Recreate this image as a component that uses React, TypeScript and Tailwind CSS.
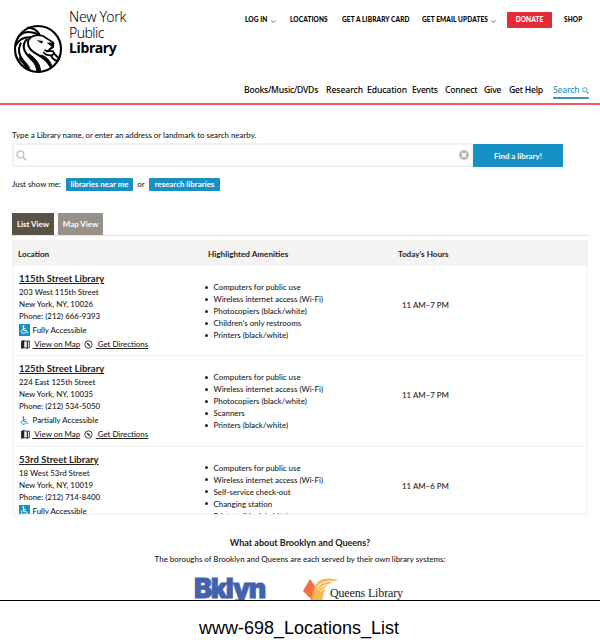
import React from "react";

const lines = "underline underline-offset-1";

function Lion() {
  return (
    <svg className="h-[50px] w-[50px] shrink-0" viewBox="38 72 150 150" fill="none" stroke="#000">
      <circle cx="113" cy="147" r="69" strokeWidth="6.5" />
      <g strokeLinecap="round" strokeLinejoin="round">
        <path d="M57 107 Q80 86 117 104" strokeWidth="6" />
        <path d="M82 83 Q106 83 117 103" strokeWidth="6" />
        <path d="M46 136 Q60 110 90 112" strokeWidth="6" />
        <path d="M92 111 Q110 101 128 108 L158 127 L158 142 L149 146" strokeWidth="5" />
        <path d="M143 129 L161 129 L157 140 Z" fill="#000" strokeWidth="3" />
        <path d="M113 122 L127 124 L125 129 Z" fill="#000" strokeWidth="2" />
        <path d="M157 141 L143 153 L134 151 M139 154 L158 153 L161 160 L154 167 L137 164 L130 158" strokeWidth="5" />
        <path d="M91 112 C77 123 82 145 101 157 C116 166 138 176 152 201" strokeWidth="6" />
        <path d="M79 118 C62 137 72 157 89 174 C103 188 112 195 118 215" strokeWidth="6" />
        <path d="M87 162 C106 176 119 190 121 214 L110 214 C106 192 96 178 84 167 Z" fill="#000" strokeWidth="3" />
        <path d="M124 165 C138 170 148 180 155 197 L149 201 C142 184 133 175 120 168 Z" fill="#000" strokeWidth="2" />
        <path d="M61 130 C50 152 58 170 70 184" strokeWidth="6" />
        <path d="M58 172 C75 183 86 195 91 212 L76 205 C72 195 66 186 57 180 Z" fill="#000" strokeWidth="2" />
        <path d="M153 167 Q156 178 171 183 M161 160 L177 177" strokeWidth="6" />
      </g>
    </svg>
  );
}

function Glass({ className }: { className: string }) {
  return (
    <svg className={className} viewBox="0 0 12 12" fill="none" stroke="currentColor">
      <circle cx="4.8" cy="4.8" r="3.8" strokeWidth="1.4" />
      <path d="M7.6 7.6 L11.2 11.2" strokeWidth="1.8" />
    </svg>
  );
}

function Caret() {
  return (
    <svg className="mt-[2px] h-[3px] w-[5px]" viewBox="0 0 5 3" fill="none" stroke="#555" strokeWidth=".8">
      <path d="M.3 .4 Q1 2 2.5 2 Q4 2 4.7 .4" />
    </svg>
  );
}

function Wheelchair({ full }: { full: boolean }) {
  return (
    <svg
      className={full ? "h-[11.5px] w-[11px] shrink-0 bg-[#1b91c3] text-white" : "h-[11.5px] w-[11px] shrink-0 text-[#1b91c3]"}
      viewBox="0 0 11 11.5"
      fill="none"
      stroke="currentColor"
    >
      <circle cx="4.4" cy="2.3" r="1" fill="currentColor" stroke="none" />
      <path d="M4.5 3 V6.4 H7.2 L8.1 8.7 L9.2 8.3 M4.5 4.7 H6.8" strokeWidth=".95" />
      <path d="M3.7 5.1 A2.2 2.2 0 1 0 6.6 7.9" strokeWidth=".9" />
    </svg>
  );
}

function MapIcon() {
  return (
    <svg className="h-[9px] w-[9px] shrink-0" viewBox="0 0 9 9" fill="none" stroke="#222">
      <path d="M.7 1.2 L3 .7 L6 1.3 L8.3 .8 V7.6 L6 8.2 L3 7.6 L.7 8.2 Z" strokeWidth=".9" />
      <path d="M.7 1.2 L3 .7 V7.6 L.7 8.2 Z" fill="#222" strokeWidth=".6" />
      <path d="M6.3 1.3 V8.2" strokeWidth="1.2" />
    </svg>
  );
}

function Compass() {
  return (
    <svg className="h-[9px] w-[9px] shrink-0" viewBox="0 0 9 9" fill="none" stroke="#333">
      <circle cx="4.5" cy="4.5" r="3.7" strokeWidth=".9" />
      <path d="M2.2 2.2 L5.2 3.8 L6.8 6.8 L3.8 5.2 Z" fill="#333" stroke="none" />
    </svg>
  );
}

const libraries = [
  {
    name: "115th Street Library", street: "203 West 115th Street", city: "New York, NY, 10026", phone: "(212) 666-9393",
    full: true, hours: "11 AM–7 PM",
    amenities: ["Computers for public use", "Wireless internet access (Wi-Fi)", "Photocopiers (black/white)", "Children's only restrooms", "Printers (black/white)"],
  },
  {
    name: "125th Street Library", street: "224 East 125th Street", city: "New York, NY, 10035", phone: "(212) 534-5050",
    full: false, hours: "11 AM–7 PM",
    amenities: ["Computers for public use", "Wireless internet access (Wi-Fi)", "Photocopiers (black/white)", "Scanners", "Printers (black/white)"],
  },
  {
    name: "53rd Street Library", street: "18 West 53rd Street", city: "New York, NY, 10019", phone: "(212) 714-8400",
    full: true, hours: "11 AM–6 PM",
    amenities: ["Computers for public use", "Wireless internet access (Wi-Fi)", "Self-service check-out", "Changing station", "Printers (black/white)"],
  },
];

function Row({ lib }: { lib: (typeof libraries)[number] }) {
  return (
    <div className="flex h-[90.4px] shrink-0 border-b border-[#f3f3f3]">
      <div className="w-[192px] pl-[6px] pt-[6px]">
        <div className="text-[9.5px] leading-[14px] font-bold underline underline-offset-1">{lib.name}</div>
        <div>{lib.street}</div>
        <div>{lib.city}</div>
        <div>Phone: {lib.phone}</div>
        <div className="mt-[2px] flex h-[12px] items-center gap-[2.5px]">
          <Wheelchair full={lib.full} />
          <span>{lib.full ? "Fully Accessible" : "Partially Accessible"}</span>
        </div>
        <div className="mt-[2px] flex h-[12px] items-center pl-[2px]">
          <MapIcon />
          <span className={"ml-[2.5px] whitespace-pre " + lines}>{" View on Map"}</span>
          <span className="w-[4px]" />
          <Compass />
          <span className={"ml-[2.5px] whitespace-pre " + lines}>{" Get Directions"}</span>
        </div>
      </div>
      <ul className="w-[197px] pt-[15px]">
        {lib.amenities.map((a) => (
          <li key={a} className="flex items-center">
            <span className="mr-[5.5px] h-[3px] w-[3px] rounded-full bg-[#222]" />
            {a}
          </li>
        ))}
      </ul>
      <div className="pt-[33px]">{lib.hours}</div>
    </div>
  );
}

export default function App() {
  return (
    <div className="flex h-[640px] w-[600px] flex-col overflow-hidden bg-white font-['Lato',sans-serif] text-[7.9px] leading-[12px] font-medium whitespace-nowrap text-[#222]">
      <div className="flex h-[600px] shrink-0 flex-col overflow-hidden">
        <header className="flex h-[105px] shrink-0 border-b-2 border-[#f05a5f] font-['Noto_Sans',sans-serif] text-black">
          <div className="flex w-[244px] pl-[13px]">
            <div className="pt-[24px]"><Lion /></div>
            <div className="ml-[6px] pt-[9px] text-[14px] leading-[15.7px] font-light">
              <div className="tracking-[-0.25px]">New York</div>
              <div className="tracking-[-0.55px]">Public</div>
              <div className="font-bold tracking-[-0.3px]">Library</div>
            </div>
          </div>
          <div className="flex flex-1 flex-col">
            <div className="flex h-[40px] items-center pl-[1px] font-['Lato',sans-serif] text-[6.5px] font-black tracking-[.12px]">
              <span className="flex w-[45px] items-center gap-[3px]">LOG IN <Caret /></span>
              <span className="w-[52px]">LOCATIONS</span>
              <span className="w-[80px]">GET A LIBRARY CARD</span>
              <span className="flex w-[85px] items-center gap-[3px]">GET EMAIL UPDATES <Caret /></span>
              <span className="flex h-[16px] w-[45px] items-center justify-center rounded-[1px] bg-[#e32b36] text-white">DONATE</span>
              <span className="ml-[12px]">SHOP</span>
            </div>
            <nav className="flex pt-[44px] text-[8.6px] leading-[13px] font-medium tracking-[-.22px]">
              <span className="w-[82px]">Books/Music/DVDs</span>
              <span className="w-[41px] tracking-[-.05px]">Research</span>
              <span className="w-[45px] tracking-[-.1px]">Education</span>
              <span className="w-[33px]">Events</span>
              <span className="w-[39px]">Connect</span>
              <span className="w-[25px]">Give</span>
              <span className="w-[44px]">Get Help</span>
              <span className="flex w-[36px] items-center justify-between border-b-2 border-[#3b96b4] text-[#3b96b4]">
                Search <Glass className="h-[7px] w-[7px]" />
              </span>
            </nav>
          </div>
        </header>
        <main className="flex flex-col px-[12px]">
          <div className="mt-[24px]">Type a Library name, or enter an address or landmark to search nearby.</div>
          <div className="mt-[2px] flex h-[24px]">
            <div className="flex w-[461px] items-center justify-between border-2 border-r border-[#f1f1f1] pr-[3px] pl-[2px] text-[#bebab3]">
              <Glass className="h-[11px] w-[11px]" />
              <svg className="h-[10px] w-[10px]" viewBox="0 0 10 10">
                <circle cx="5" cy="5" r="5" fill="#bebab3" />
                <path d="M3 3 L7 7 M7 3 L3 7" stroke="#fff" strokeWidth="1.5" />
              </svg>
            </div>
            <div className="mt-[1px] flex w-[90px] items-center justify-center bg-[#1790c4] font-bold text-white">Find a library!</div>
          </div>
          <div className="mt-[10px] flex h-[14px] items-center">
            <span className="w-[54px]">Just show me:</span>
            <span className="flex h-[13px] w-[67px] items-center justify-center rounded-[1px] bg-[#1790c4] font-bold text-white">libraries near me</span>
            <span className="w-[16px] text-center">or</span>
            <span className="flex h-[13px] w-[71px] items-center justify-center rounded-[1px] bg-[#1790c4] font-bold text-white">research libraries</span>
          </div>
          <div className="mt-[22px] flex h-[23px] w-[576px] gap-[4px] border-b border-[#e4e4e4] font-bold text-white">
            <span className="flex w-[42px] items-center justify-center bg-[#5b5247]">List View</span>
            <span className="flex w-[45px] items-center justify-center bg-[#979189]">Map View</span>
          </div>
          <div className="mt-[4px] flex h-[275px] flex-col overflow-hidden border border-[#f1f1f1]">
            <div className="flex h-[25px] shrink-0 items-center bg-[#f5f4f3] pl-[5px] text-[8.15px] font-bold">
              <span className="w-[190px]">Location</span>
              <span className="w-[190px]">Highlighted Amenities</span>
              <span>Today's Hours</span>
            </div>
            {libraries.map((l) => <Row key={l.name} lib={l} />)}
          </div>
          <div className="mt-[21px] text-center text-[9px] leading-[14px] font-bold">What about Brooklyn and Queens?</div>
          <div className="mt-[3px] text-center">The boroughs of Brooklyn and Queens are each served by their own library systems:</div>
          <div className="mt-[12px] flex h-[24px] items-start">
            <div className="ml-[182px] w-[109px] font-['Inter',sans-serif] text-[27px] leading-[24px] font-black tracking-[-1.3px] text-[#4361ad] [-webkit-text-stroke:.8px_#4361ad]">Bklyn</div>
            <svg className="h-[24px] w-[35px]" viewBox="0 0 35 24">
              <path d="M7 2 L12 9 L8 22 L0 14 Z" fill="#ee7146" />
              <path d="M12 9 L14 13 L13 24 H7 Z" fill="#f59a3c" />
              <path d="M12 12 C12 3 22 -1 35 3 L29 5 L25 8 L22 11 L19 24 H9 Z" fill="#f6b95a" />
              <path d="M14 11 Q17 4 31 4 M15 13 Q19 8 27 7 M17 15 Q20 11 25 9" fill="none" stroke="#fff" strokeWidth="1" />
            </svg>
            <div className="-ml-[8px] pt-[9px] font-['Liberation_Serif',serif] text-[12px] leading-[14px] tracking-[-.15px] text-[#222]">Queens Library</div>
          </div>
        </main>
      </div>
      <footer className="flex h-[40px] shrink-0 justify-center border-t border-black pt-[17px] pr-[2px] font-['Liberation_Sans',sans-serif] text-[18px] leading-[20px] font-normal text-black">
        www-698_Locations_List
      </footer>
    </div>
  );
}
